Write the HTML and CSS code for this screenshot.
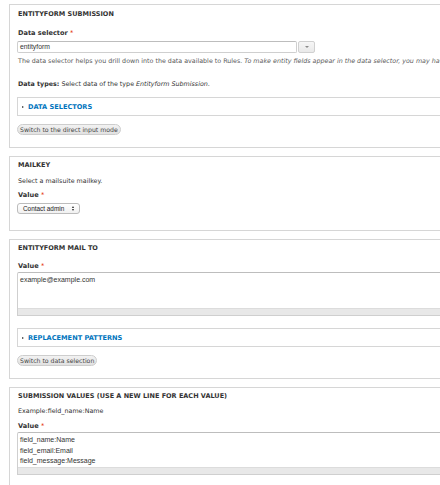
FILE: index.html
```html
<!DOCTYPE html>
<html lang="en">
<head>
<meta charset="utf-8">
<title>Rules action</title>
<link rel="stylesheet" href="styles.css">
</head>
<body>
<div class="page">

  <section class="panel p1">
    <div class="legend">Entityform Submission</div>
    <div class="label l-ds">Data selector <span class="req">*</span></div>
    <div class="input-row">
      <div class="text-input">entityform</div>
      <div class="ds-btn"><span class="caret"></span></div>
    </div>
    <div class="desc">The data selector helps you drill down into the data available to Rules. <em>To make entity fields appear in the data selector, you may have to use the condition 'entity has field' (or 'content is of type').</em></div>
    <div class="types"><b>Data types:</b> Select data of the type <em>Entityform Submission</em>.</div>
    <div class="details d1"><span class="tri"></span><span class="summary">Data selectors</span></div>
    <div class="btn b1">Switch to the direct input mode</div>
  </section>

  <section class="panel p2">
    <div class="legend">Mailkey</div>
    <div class="text t-mk">Select a mailsuite mailkey.</div>
    <div class="label l-mk">Value <span class="req">*</span></div>
    <div class="select">Contact admin <span class="updown"><span class="up"></span><span class="down"></span></span></div>
  </section>

  <section class="panel p3">
    <div class="legend">Entityform mail to</div>
    <div class="label l-to">Value <span class="req">*</span></div>
    <div class="textarea ta1">
      <div class="ta-body">example@example.com</div>
      <div class="grippie"></div>
    </div>
    <div class="details d2"><span class="tri"></span><span class="summary">Replacement patterns</span></div>
    <div class="btn b2">Switch to data selection</div>
  </section>

  <section class="panel p4">
    <div class="legend">Submission values (use a new line for each value)</div>
    <div class="text t-ex">Example:field_name:Name</div>
    <div class="label l-sv">Value <span class="req">*</span></div>
    <div class="textarea ta2">
      <div class="ta-body">field_name:Name<br>field_email:Email<br>field_message:Message</div>
      <div class="grippie"></div>
    </div>
  </section>

</div>
</body>
</html>
```

FILE: styles.css
```css
html, body {
  margin: 0;
  padding: 0;
  background: #ffffff;
}

body {
  overflow: hidden;
  font-family: "DejaVu Sans", Verdana, sans-serif;
  font-size: 6.35px;
  color: #333333;
}

.page {
  width: 900px;
  padding: 4px 0 0 9px;
}

.panel {
  width: 700px;
  border: 1px solid #d6d6d6;
  padding: 0 8px 0 7px;
  margin-bottom: 8px;
  background: #ffffff;
}

.legend {
  font-weight: bold;
  font-size: 6.5px;
  text-transform: uppercase;
  line-height: 10px;
  margin-top: 3px;
  color: #333333;
  padding-left: 1px;
}

.p1 .legend { margin-top: 4px; }

.label {
  font-weight: bold;
  font-size: 6.6px;
  line-height: 10px;
  color: #333333;
  padding-left: 1px;
}

.req {
  color: #e32700;
  font-weight: normal;
}

.text {
  line-height: 10px;
  color: #333333;
  padding-left: 1px;
}

/* panel 1 */
.l-ds { margin-top: 9px; }

.input-row {
  display: flex;
  margin-top: 3px;
  height: 12px;
}

.text-input {
  width: 280px;
  height: 12px;
  box-sizing: border-box;
  border: 1px solid #cfcfcf;
  border-top-color: #bdbdbd;
  border-radius: 2px;
  font-family: "Liberation Sans", Arial, sans-serif;
  font-size: 6.8px;
  line-height: 10px;
  padding-left: 2px;
  color: #333333;
}

.ds-btn {
  width: 17px;
  height: 12px;
  box-sizing: border-box;
  margin-left: 1px;
  border: 1px solid #d0d0d0;
  border-radius: 2px;
  background: linear-gradient(#f6f6f6, #e9e9e9);
  display: flex;
  align-items: center;
  justify-content: center;
}

.caret {
  width: 0;
  height: 0;
  border-left: 2px solid transparent;
  border-right: 2px solid transparent;
  border-top: 2px solid #8a8a8a;
}

.desc {
  margin-top: 3px;
  line-height: 10px;
  color: #5a5a5a;
  white-space: nowrap;
  padding-left: 1px;
}

.types {
  margin-top: 13px;
  line-height: 10px;
  color: #333333;
  padding-left: 1px;
}

.details {
  height: 19px;
  box-sizing: border-box;
  border: 1px solid #d6d6d6;
  display: flex;
  align-items: center;
  padding-left: 4px;
}

.d1 { margin-top: 8px; }

.tri {
  width: 0;
  height: 0;
  border-top: 1.5px solid transparent;
  border-bottom: 1.5px solid transparent;
  border-left: 2px solid #333333;
  margin-right: 4px;
}

.summary {
  color: #0074bd;
  font-weight: bold;
  font-size: 6.6px;
  text-transform: uppercase;
}

.btn {
  display: inline-block;
  height: 11px;
  box-sizing: border-box;
  border: 1px solid #cdcdcd;
  border-radius: 6px;
  background: linear-gradient(#f2f2f2, #e1e1e1);
  padding: 0 2px;
  line-height: 9px;
  font-size: 6.2px;
  color: #444444;
  vertical-align: top;
}

.b1 { margin: 8px 0 12px; display: block; width: fit-content; }

/* panel 2 */
.t-mk { margin-top: 6px; }
.l-mk { margin-top: 4px; }

.select {
  margin: 3px 0 16px;
  width: 63px;
  height: 11px;
  box-sizing: border-box;
  border: 1px solid #bcbcbc;
  border-radius: 3px;
  background: linear-gradient(#ffffff, #f1f1f1);
  font-family: "Liberation Sans", Arial, sans-serif;
  font-size: 6.4px;
  line-height: 9px;
  padding-left: 5px;
  color: #222222;
  display: flex;
  align-items: center;
  position: relative;
}

.updown {
  position: absolute;
  right: 5px;
  top: 2px;
  display: flex;
  flex-direction: column;
  gap: 1px;
}

.up {
  width: 0;
  height: 0;
  border-left: 1.5px solid transparent;
  border-right: 1.5px solid transparent;
  border-bottom: 2px solid #222222;
}

.down {
  width: 0;
  height: 0;
  border-left: 1.5px solid transparent;
  border-right: 1.5px solid transparent;
  border-top: 2px solid #222222;
}

/* panel 3 */
.l-to { margin-top: 8px; }

.textarea {
  margin-top: 1px;
  border: 1px solid #cfcfcf;
  border-top-color: #bdbdbd;
  border-radius: 2px 2px 0 0;
  font-family: "Liberation Sans", Arial, sans-serif;
  font-size: 7px;
  color: #333333;
}

.ta-body {
  padding: 2px 2px 0;
  line-height: 10.7px;
  box-sizing: border-box;
}

.ta1 .ta-body { height: 35px; }
.ta2 .ta-body { height: 34px; }

.grippie {
  height: 6px;
  background: #e8e8e8;
  border-top: 1px solid #dcdcdc;
}

.d2 { margin-top: 12px; }

.b2 { margin: 8px 0 12px; display: block; width: fit-content; }

/* panel 4 */
.t-ex { margin-top: 5px; }
.l-sv { margin-top: 5px; }

.p4 { height: 120px; }
```
